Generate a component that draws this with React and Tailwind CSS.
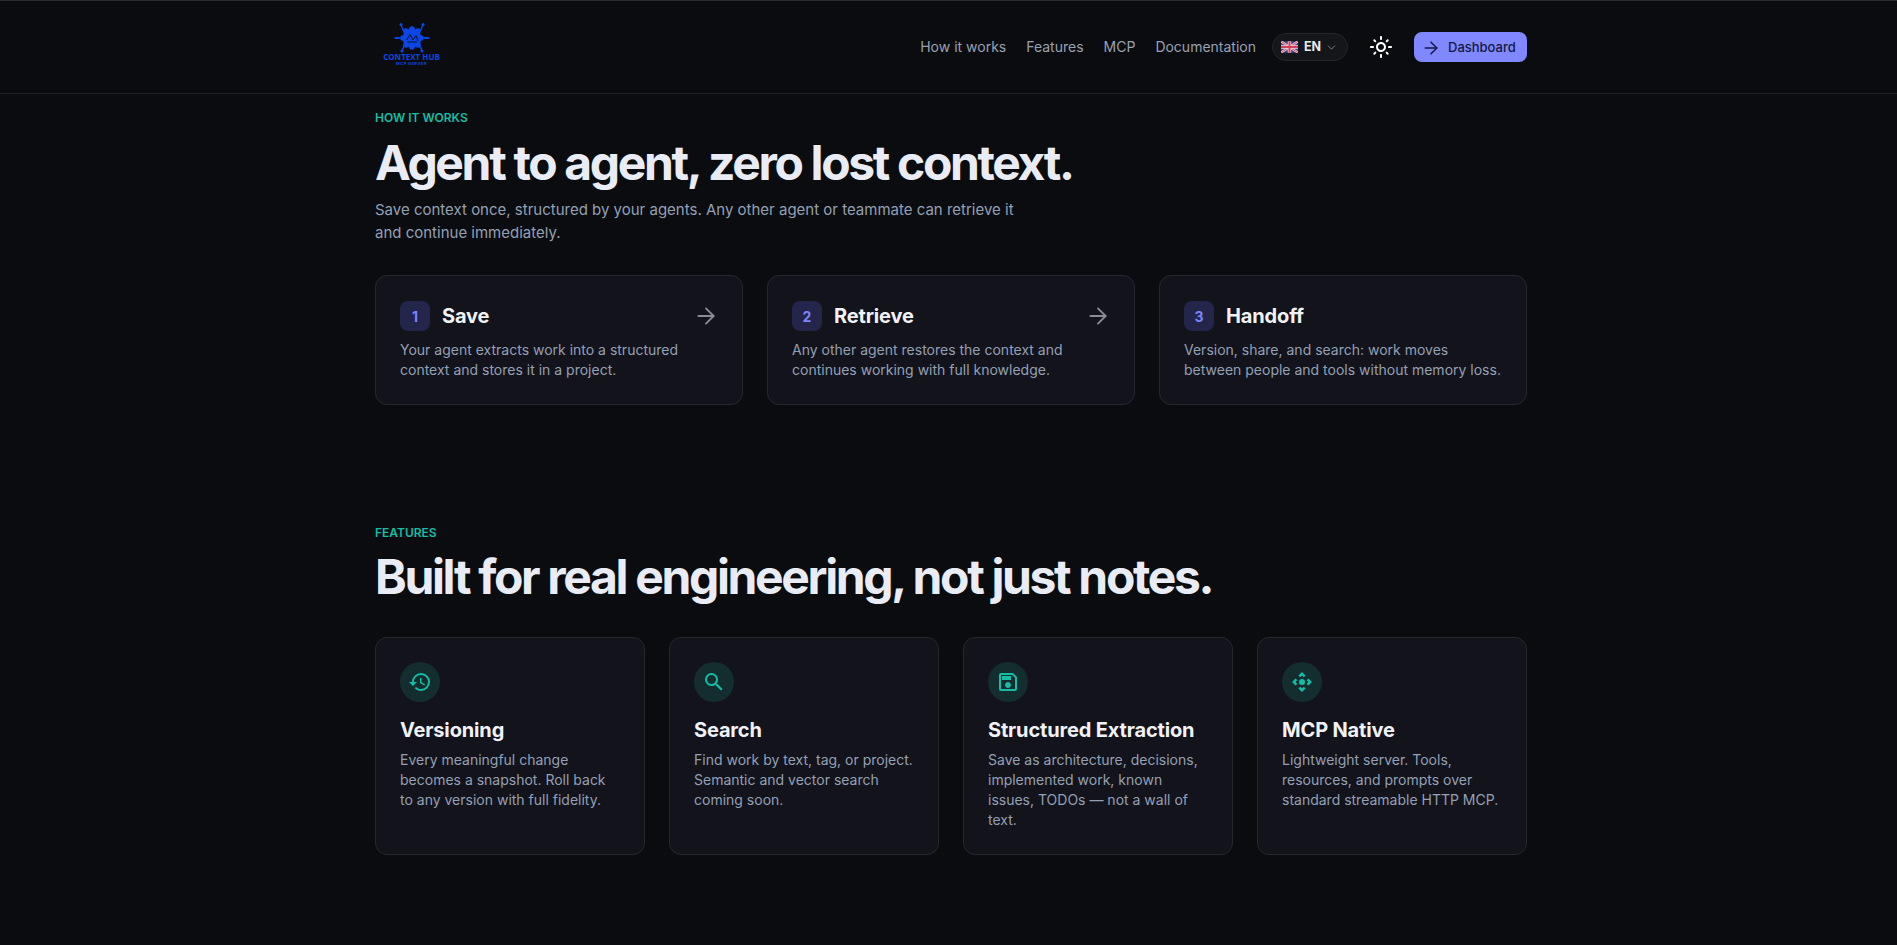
import React from "react";
import { MdHistory, MdSearch, MdOutlineSave, MdControlCamera, MdOutlineLightMode } from "react-icons/md";
import { ArrowRight, ChevronDown } from "lucide-react";

const Flag = () => (
  <svg viewBox="0 0 60 40" className="w-[17px] h-[12px] rounded-[1px]">
    <rect width="60" height="40" fill="#3b4a8f" />
    <path d="M0 0L60 40M60 0L0 40" stroke="#f0c8d0" strokeWidth="8" />
    <path d="M0 0L60 40M60 0L0 40" stroke="#d0405f" strokeWidth="3" />
    <path d="M30 0V40M0 20H60" stroke="#f0d8dc" strokeWidth="12" />
    <path d="M30 0V40M0 20H60" stroke="#d0405f" strokeWidth="7" />
  </svg>
);

const Logo = () => (
  <div className="flex flex-col items-center w-[57px] ml-[8px] mb-[5px]">
    <svg viewBox="0 2 60 31" className="w-[60px] h-[31px] shrink-0" fill="none">
      <g stroke="#0b46e6" strokeWidth="1.4" strokeLinecap="round">
        <path d="M19 4.5L21 10L25 12M41 4.5L39 10L35 12M20 31L22 26L25 24M40 31L38 26L35 24" />
        <path d="M13.5 18H17M43 18H46.5" strokeWidth="2.2" />
      </g>
      <g fill="#0b46e6">
        <circle cx="19" cy="4.5" r="1.5" /><circle cx="41" cy="4.5" r="1.5" />
        <circle cx="20" cy="31" r="1.5" /><circle cx="40" cy="31" r="1.5" />
        <circle cx="30" cy="18" r="9.5" />
        <circle cx="30" cy="9" r="2.8" /><circle cx="24" cy="11" r="2.8" /><circle cx="36" cy="11" r="2.8" />
        <circle cx="21" cy="18" r="2.8" /><circle cx="39" cy="18" r="2.8" />
        <circle cx="24" cy="25" r="2.8" /><circle cx="36" cy="25" r="2.8" /><circle cx="30" cy="27" r="2.8" />
      </g>
      <path d="M24.5 20L28 14.5L31 20L34 15.5L36 21M25.5 22H35" stroke="#07111f" strokeWidth="1" />
    </svg>
    <span className="text-[#0b46e6] text-[8px] leading-[8px] font-bold font-['Open_Sans',sans-serif] whitespace-nowrap">CONTEXT HUB</span>
    <span className="text-[#0b46e6] text-[4px] leading-[6px] font-bold tracking-[0.5px] whitespace-nowrap">MCP SERVER</span>
  </div>
);

const steps = [
  ["1", "Save", "Your agent extracts work into a structured context and stores it in a project.", true],
  ["2", "Retrieve", "Any other agent restores the context and continues working with full knowledge.", true],
  ["3", "Handoff", "Version, share, and search: work moves between people and tools without memory loss.", false],
];

const features = [
  [MdHistory, "Versioning", "Every meaningful change becomes a snapshot. Roll back to any version with full fidelity."],
  [MdSearch, "Search", "Find work by text, tag, or project. Semantic and vector search coming soon."],
  [MdOutlineSave, "Structured Extraction", "Save as architecture, decisions, implemented work, known issues, TODOs — not a wall of text."],
  [MdControlCamera, "MCP Native", "Lightweight server. Tools, resources, and prompts over standard streamable HTTP MCP."],
];

export default function App() {
  return (
    <div className="min-h-[945px] bg-[#0a0c10] font-['Inter',sans-serif] border-t border-[#2a2c30]">
      <header className="h-[93px] border-b border-[#1e2026] flex justify-center pl-[5px]">
        <div className="w-[1152px] flex items-center justify-between">
          <Logo />
          <nav className="flex items-center text-[14px] text-[#9aa1b2]">
            <a className="mr-5 pb-[1px]">How it works</a>
            <a className="mr-5 pb-[1px]">Features</a>
            <a className="mr-5 pb-[1px]">MCP</a>
            <a className="mr-4 pb-[1px]">Documentation</a>
            <div className="h-[28px] w-[76px] rounded-full border border-[#24262c] bg-[#14161a] flex items-center pl-[8px] gap-[6px] mr-[21px]">
              <Flag />
              <span className="text-[12.5px] font-bold text-[#e8eaf0]">EN</span>
              <ChevronDown className="text-[#8b90a0] -ml-[2px]" size={13} strokeWidth={1.6} />
            </div>
            <MdOutlineLightMode className="text-white mr-[21px]" size={24} />
            <button className="h-[30px] w-[113px] rounded-[8px] bg-[#8088ff] text-[#15183f] text-[13px] font-medium flex items-center pl-[7px] pt-[1px] gap-[7px]">
              <ArrowRight size={20} strokeWidth={1.8} />
              Dashboard
            </button>
          </nav>
        </div>
      </header>

      <main className="flex flex-col items-center pl-[5px]">
        <section className="w-[1152px] pt-[16px]">
          <p className="text-[12px] leading-[16px] font-semibold text-[#15bda6]">HOW IT WORKS</p>
          <h1 className="mt-[8px] text-[48px] leading-[58px] font-bold tracking-[-2.35px] text-[#e9ecf5]">Agent to agent, zero lost context.</h1>
          <p className="mt-[6px] w-[650px] text-[15px] leading-[23px] text-[#94a0b4]">
            Save context once, structured by your agents. Any other agent or teammate can retrieve it and continue immediately.
          </p>
          <div className="mt-[31px] grid grid-cols-3 gap-[24px]">
            {steps.map(([n, title, text, arrow]) => (
              <div key={n} className="h-[130px] rounded-[12px] border border-[#262830] bg-[#12131b] px-[24px] pt-[25px]">
                <div className="flex items-center">
                  <span className="w-[30px] h-[30px] rounded-[8px] bg-[#23254a] text-[#7b83ff] text-[14px] font-bold flex items-center justify-center">{n}</span>
                  <h3 className="ml-[12px] text-[20px] font-bold tracking-[-0.15px] text-[#f0f2f8] leading-[30px]">{title}</h3>
                  {arrow && <ArrowRight className="ml-auto -mr-[1px] text-[#8a8d96]" size={26} strokeWidth={1.7} />}
                </div>
                <p className="mt-[9px] text-[14px] leading-[20px] text-[#94a0b4]">{text}</p>
              </div>
            ))}
          </div>
        </section>

        <section className="w-[1152px] mt-[120px]">
          <p className="text-[12px] leading-[16px] font-semibold text-[#15bda6]">FEATURES</p>
          <h2 className="mt-[7px] text-[48px] leading-[58px] font-bold tracking-[-2.35px] text-[#e9ecf5]">Built for real engineering, not just notes.</h2>
          <div className="mt-[31px] grid grid-cols-4 gap-[24px]">
            {features.map(([Icon, title, text]) => (
              <div key={title} className="h-[218px] rounded-[12px] border border-[#262830] bg-[#12131b] px-[24px] pt-[24px]">
                <span className="w-[40px] h-[40px] rounded-full bg-[#142e2f] text-[#15bda6] flex items-center justify-center">
                  <Icon size={24} />
                </span>
                <h3 className="mt-[13px] text-[20px] leading-[30px] font-bold tracking-[-0.15px] text-[#f0f2f8]">{title}</h3>
                <p className="mt-[5px] text-[14px] leading-[20px] text-[#94a0b4]">{text}</p>
              </div>
            ))}
          </div>
        </section>
      </main>
    </div>
  );
}
